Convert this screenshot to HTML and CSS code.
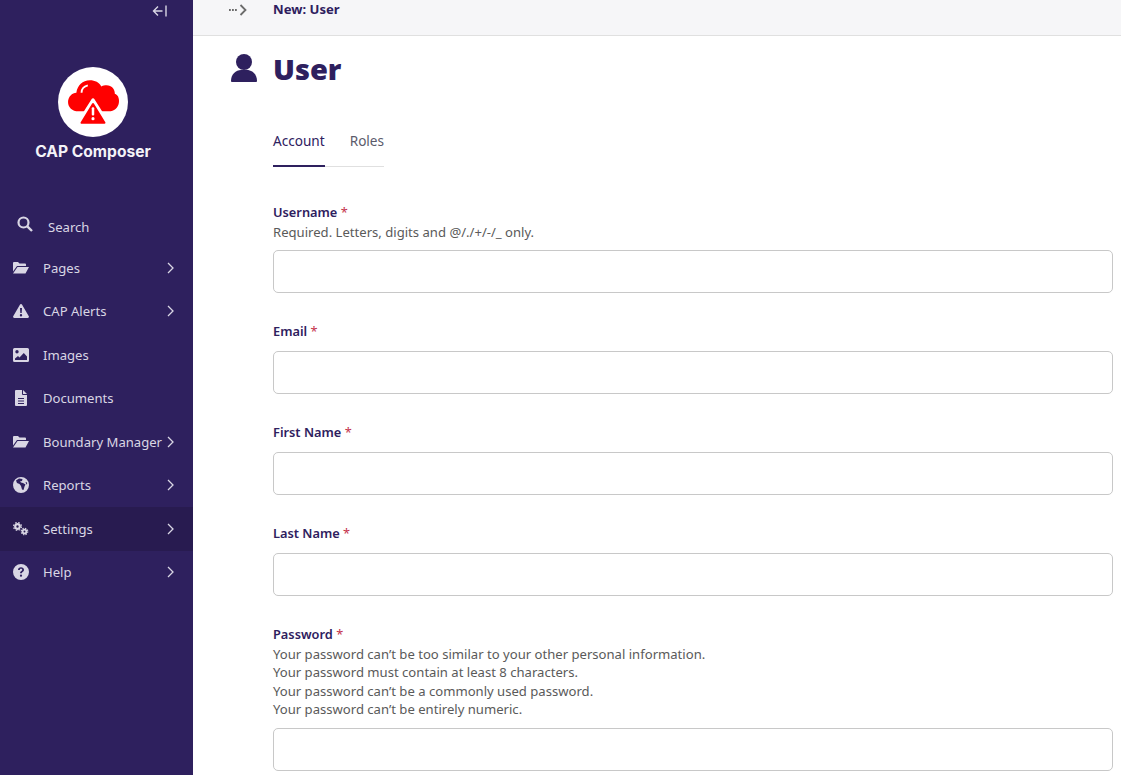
FILE: index.html
```html
<!DOCTYPE html>
<html lang="en"><head>
  <meta charset="utf-8">
  <title>New: User</title>
  <link rel="stylesheet" href="styles.css">
</head>
<body>

<aside class="sidebar">
  <div class="collapse">
    <svg width="16" height="12" viewBox="0 0 16 12"><path d="M7 1.500 2.500 6 7 10.500M2.500 6H11.500M15 .5V11.500" fill="none" stroke="currentColor" stroke-width="1.400"/></svg>
  </div>
  <div class="brand">
    <div class="logo">
      <svg width="52" height="46" viewBox="0 0 50 44">
        <path fill="#f00" d="M11 31C5 31 1 27 1 22c0-5 4-9 8-9 1-7 6-12 13-12 5 0 9 2 11 6 2-1 3-1 5-1 5 0 8 4 8 8 3 1 4 4 4 7 0 5-3 9-8 10Z"/>
        <path fill="none" stroke="#fff" stroke-width="1.800" d="M14 13c0-3 2-6 6-7"/>
        <path fill="#fff" stroke="#fff" stroke-width="3" stroke-linejoin="round" d="M25 20 11 42h28Z"/>
        <path fill="#f00" stroke="#f00" stroke-width="2" stroke-linejoin="round" d="M25 24 14 42h22Z"/>
        <rect x="23.800" y="27" width="2.400" height="8" rx="1" fill="#fff"/>
        <circle cx="25" cy="38" r="1.500" fill="#fff"/>
      </svg>
    </div>
    <div class="brand-name">CAP Composer</div>
  </div>
  <div class="search">
    <svg width="16" height="16" viewBox="0 0 16 16"><circle cx="6.500" cy="6.500" r="5" fill="none" stroke="currentColor" stroke-width="2.200"/><path d="M10.300 10.300 15 15" stroke="currentColor" stroke-width="2.400"/></svg>
    <span>Search</span>
  </div>
  <ul class="menu">
    <li>
      <svg class="icon" width="16" height="13" viewBox="0 0 16 13"><path d="M0 2a1 1 0 0 1 1-1h4l1.500 1.500H12a1 1 0 0 1 1 1V5H4L0 10.500Z M4.500 6H16l-3.500 6.500H0Z"/></svg>
      <span class="label">Pages</span><svg class="chev" width="7" height="12" viewBox="0 0 7 12"><path d="M1 1l5 5-5 5" fill="none" stroke="currentColor" stroke-width="1.300"/></svg>
    </li>
    <li>
      <svg class="icon" width="16" height="14" viewBox="0 0 16 14"><path fill-rule="evenodd" d="M8 0c.5 0 .9.3 1.100.7l6.700 11.500c.4.800-.1 1.800-1.100 1.800H1.300C.3 14-.2 13 .2 12.200L6.900.7C7.100.3 7.500 0 8 0ZM7 4l.3 5h1.400L9 4ZM8 10a1.200 1.200 0 1 0 0 2.400A1.200 1.200 0 0 0 8 10Z"/></svg>
      <span class="label">CAP Alerts</span><svg class="chev" width="7" height="12" viewBox="0 0 7 12"><path d="M1 1l5 5-5 5" fill="none" stroke="currentColor" stroke-width="1.300"/></svg>
    </li>
    <li>
      <svg class="icon" width="16" height="14" viewBox="0 0 16 14"><path fill-rule="evenodd" d="M1.500 0h13A1.500 1.500 0 0 1 16 1.500v11a1.500 1.500 0 0 1-1.500 1.500h-13A1.500 1.500 0 0 1 0 12.500v-11A1.500 1.500 0 0 1 1.500 0ZM4 2a1.700 1.700 0 1 0 0 3.400A1.700 1.700 0 0 0 4 2ZM2 12h12V8.500L10.800 5 6.500 9.500 5 8l-3 2.500Z"/></svg>
      <span class="label">Images</span>
    </li>
    <li>
      <svg class="icon doc" width="12" height="16" viewBox="0 0 12 16"><path fill-rule="evenodd" d="M1 0h6v4a1 1 0 0 0 1 1h4v10a1 1 0 0 1-1 1H1a1 1 0 0 1-1-1V1a1 1 0 0 1 1-1ZM8 0l4 4H8ZM3 8v1h6V8ZM3 10.500v1h6v-1ZM3 13v1h6v-1Z"/></svg>
      <span class="label">Documents</span>
    </li>
    <li>
      <svg class="icon" width="16" height="13" viewBox="0 0 16 13"><path d="M0 2a1 1 0 0 1 1-1h4l1.500 1.500H12a1 1 0 0 1 1 1V5H4L0 10.500Z M4.500 6H16l-3.500 6.500H0Z"/></svg>
      <span class="label">Boundary Manager</span><svg class="chev" width="7" height="12" viewBox="0 0 7 12"><path d="M1 1l5 5-5 5" fill="none" stroke="currentColor" stroke-width="1.300"/></svg>
    </li>
    <li>
      <svg class="icon" width="16" height="16" viewBox="0 0 16 16"><path fill-rule="evenodd" d="M8 0a8 8 0 1 1 0 16A8 8 0 0 1 8 0ZM6 1.500 3 3.500l1 2.500 2.500 1 1.500 2 1 3.500 1.500.5 1-3.500 1-2-2.500-1.500-2-.5L7 4.500 9 4l.5-2ZM12.500 5l1 2.500.8-.5-.8-2Z"/></svg>
      <span class="label">Reports</span><svg class="chev" width="7" height="12" viewBox="0 0 7 12"><path d="M1 1l5 5-5 5" fill="none" stroke="currentColor" stroke-width="1.300"/></svg>
    </li>
    <li class="active">
      <svg class="icon" width="16" height="14" viewBox="0 0 16 14"><circle cx="4.500" cy="4.500" r="2.300" fill="none" stroke="currentColor" stroke-width="2.200"/><circle cx="4.500" cy="4.500" r="3.900" fill="none" stroke="currentColor" stroke-width="1.200" stroke-dasharray="1.600 1.500"/><circle cx="11.500" cy="9.500" r="1.900" fill="none" stroke="currentColor" stroke-width="1.900"/><circle cx="11.500" cy="9.500" r="3.300" fill="none" stroke="currentColor" stroke-width="1.100" stroke-dasharray="1.400 1.200"/></svg>
      <span class="label">Settings</span><svg class="chev" width="7" height="12" viewBox="0 0 7 12"><path d="M1 1l5 5-5 5" fill="none" stroke="currentColor" stroke-width="1.300"/></svg>
    </li>
    <li>
      <svg class="icon" width="16" height="16" viewBox="0 0 16 16"><path fill-rule="evenodd" d="M8 0a8 8 0 1 1 0 16A8 8 0 0 1 8 0ZM5 6h1.800c0-.8.500-1.200 1.200-1.200s1.200.4 1.200 1c0 .5-.3.800-.9 1.200-.8.500-1.200 1-1.200 2v.3h1.800V9c0-.4.200-.7.800-1.100.8-.5 1.300-1.100 1.300-2.100C11 4.200 9.700 3.300 8 3.300S5 4.300 5 6ZM8 10.600a1.100 1.100 0 1 0 0 2.200 1.100 1.100 0 0 0 0-2.200Z"/></svg>
      <span class="label">Help</span><svg class="chev" width="7" height="12" viewBox="0 0 7 12"><path d="M1 1l5 5-5 5" fill="none" stroke="currentColor" stroke-width="1.300"/></svg>
    </li>
  </ul>
</aside>

<main class="main">
  <div class="crumbs">
    <svg width="18" height="12" viewBox="0 0 18 12"><path d="M0 6h1.800M3 6h1.800M6 6h1.800" stroke="#6b6b6b" stroke-width="1.800"/><path d="M11.500 1l5 5-5 5" fill="none" stroke="#6b6b6b" stroke-width="1.800"/></svg>
    <strong>New: User</strong>
  </div>

  <header class="title">
    <svg width="26" height="30" viewBox="0 0 26 30"><circle cx="13" cy="8" r="8"/><path d="M0 27c0-7 5-11 10-11h6c5 0 10 4 10 11 0 .5-.5 1-1 1H1c-.5 0-1-.5-1-1Z"/></svg>
    <h1>User</h1>
  </header>

  <div class="content">
    <div class="tabs">
      <span class="tab current">Account</span>
      <span class="tab">Roles</span>
    </div>

    <form class="fields">
      <div class="field">
        <label>Username <em>*</em></label>
        <p class="help">Required. Letters, digits and @/./+/-/_ only.</p>
        <input type="text">
      </div>
      <div class="field">
        <label>Email <em>*</em></label>
        <input type="text">
      </div>
      <div class="field">
        <label>First Name <em>*</em></label>
        <input type="text">
      </div>
      <div class="field">
        <label>Last Name <em>*</em></label>
        <input type="text">
      </div>
      <div class="field">
        <label>Password <em>*</em></label>
        <p class="help">Your password can’t be too similar to your other personal information.<br>
        Your password must contain at least 8 characters.<br>
        Your password can’t be a commonly used password.<br>
        Your password can’t be entirely numeric.</p>
        <input type="text">
      </div>
    </form>
  </div>
</main>

</body></html>
```

FILE: styles.css
```css
html, body {
  margin: 0;
  height: 775px;
  overflow: hidden;
  background: white;
  font: 13.1px/18.5px "Noto Sans", sans-serif;
}
body {
  display: flex;
}

.sidebar {
  flex: none;
  width: 193px;
  height: 775px;
  background: #2e205e;
  color: #d9d6e4;
}
.collapse {
  height: 21px;
  padding-right: 26px;
  display: flex;
  justify-content: flex-end;
  align-items: center;
  color: #d9d6e4;
}
.brand {
  margin-top: 46px;
  padding-right: 7px;
  display: flex;
  flex-direction: column;
  align-items: center;
}
.logo {
  width: 70px;
  height: 70px;
  border-radius: 50%;
  background: white;
  display: flex;
  align-items: center;
  justify-content: center;
}
.brand-name {
  margin-top: 5px;
  font: 700 15.6px/20px Inter, sans-serif;
  color: #f4f3f8;
}
.search {
  margin-top: 46px;
  height: 38px;
  padding-left: 17px;
  display: flex;
  align-items: center;
  gap: 15px;
}
.search svg {
  margin-top: -6px;
}
.menu {
  list-style: none;
  margin: 0;
  padding: 0;
}
.menu li {
  height: 43.5px;
  padding: 0 19px 0 13px;
  display: flex;
  align-items: center;
}
.menu .active {
  background: #281b50;
}
.icon {
  flex: none;
  fill: currentColor;
  margin-right: 14px;
}
.icon.doc {
  margin-left: 2px;
  margin-right: 16px;
}
.label {
  flex: 1;
  white-space: nowrap;
}
.chev {
  flex: none;
}

.main {
  flex: 1;
  min-width: 0;
  color: #2e205e;
}
.crumbs {
  height: 35px;
  background: #f6f6f8;
  border-bottom: 1px solid #e0e0e0;
  padding-left: 36px;
  display: flex;
  gap: 26px;
  align-items: flex-start;
  line-height: 18px;
}
.crumbs svg {
  margin-top: 4px;
}
.crumbs strong {
  font-weight: 700;
}
.title {
  margin-top: 16px;
  padding-left: 38px;
  display: flex;
  gap: 16px;
  align-items: center;
  height: 34px;
}
.title svg {
  fill: #2e205e;
}
.title h1 {
  margin: 0;
  font: 900 29px/34px "Noto Sans", sans-serif;
}
.content {
  margin: 0 8px 0 80px;
}
.tabs {
  margin-top: 31px;
  display: inline-flex;
  gap: 25px;
  border-bottom: 1px solid #e0e0e0;
}
.tab {
  display: block;
  height: 49px;
  padding-top: 14px;
  box-sizing: border-box;
  color: #5b5b6b;
  font-size: 13.6px;
  line-height: 20px;
}
.tab.current {
  color: #2e205e;
  box-shadow: 0 1px 0 #2e205e;
  border-bottom: 1px solid #2e205e;
}
.fields {
  margin-top: 34.5px;
}
.field {
  margin-bottom: 28.4px;
}
.field label {
  display: block;
  font-weight: 600;
  font-size: 12.8px;
  line-height: 21px;
  margin-bottom: 9px;
}
.field em {
  color: #c4314b;
  font-style: normal;
  font-weight: 400;
}
.field .help {
  margin: -9px 0 9px;
  color: #5a5a5a;
}
.field input {
  display: block;
  width: 100%;
  height: 42.6px;
  box-sizing: border-box;
  border: 1px solid #c8c8c8;
  border-radius: 5px;
  background: white;
}
```
